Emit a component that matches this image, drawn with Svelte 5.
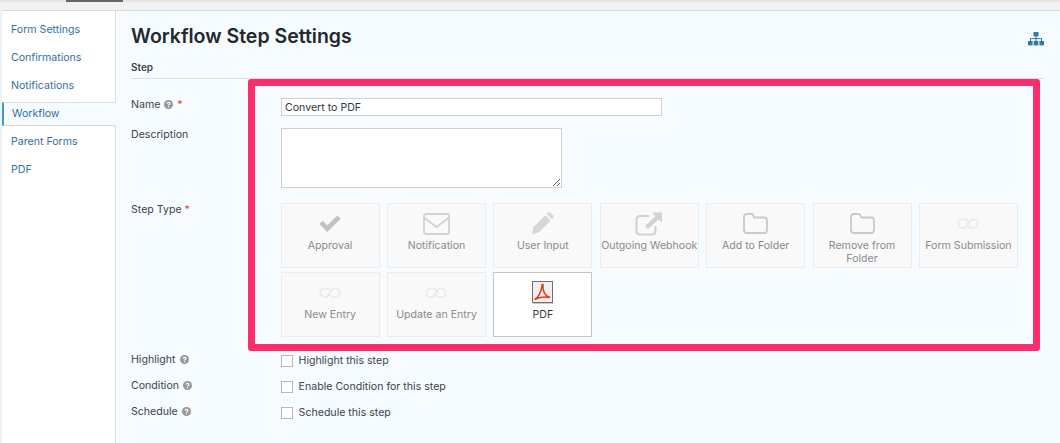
<script lang="ts">
	const menu = ['Form Settings', 'Confirmations', 'Notifications', 'Workflow', 'Parent Forms', 'PDF'];

	const step_types = [
		{ label: 'Approval', icon: 'check' },
		{ label: 'Notification', icon: 'mail' },
		{ label: 'User Input', icon: 'pencil' },
		{ label: 'Outgoing Webhook', icon: 'external' },
		{ label: 'Add to Folder', icon: 'folder' },
		{ label: 'Remove from Folder', icon: 'folder' },
		{ label: 'Form Submission', icon: 'link' },
		{ label: 'New Entry', icon: 'link' },
		{ label: 'Update an Entry', icon: 'link' },
		{ label: 'PDF', icon: 'pdf', active: true }
	];

	const options = [
		{ name: 'Highlight', text: 'Highlight this step' },
		{ name: 'Condition', text: 'Enable Condition for this step' },
		{ name: 'Schedule', text: 'Schedule this step' }
	];
</script>

{#snippet help()}
	<svg class="help" viewBox="0 0 10 10" width="9" height="9">
		<circle cx="5" cy="5" r="5" fill="#999" />
		<path d="M3.4 3.9 C3.5 2.2 6.7 2.3 6.6 4 C6.5 5.1 5 5 5 6.1" fill="none" stroke="#fff" stroke-width="1.2" />
		<rect x="4.4" y="6.9" width="1.2" height="1.2" fill="#fff" />
	</svg>
{/snippet}

<div class="topbar"><div class="tab"></div></div>

<div class="page">
	<nav class="side">
		{#each menu as item}
			<a href="#{item}" class:current={item === 'Workflow'}>{item}</a>
		{/each}
	</nav>

	<main class="content">
		<div class="head">
			<h1>Workflow Step Settings</h1>
			<svg class="tree" viewBox="0 0 16 14" width="16" height="14">
				<rect x="5.5" y="0" width="5" height="4.4" fill="#2f77b1" />
				<path d="M8 4v3M2.5 9V6.6h11V9M8 7v2" fill="none" stroke="#2f77b1" stroke-width="1" />
				<rect x="0" y="9" width="4.6" height="4.4" fill="#2f77b1" />
				<rect x="5.7" y="9" width="4.6" height="4.4" fill="#2f77b1" />
				<rect x="11.4" y="9" width="4.6" height="4.4" fill="#2f77b1" />
			</svg>
		</div>
		<h2>Step</h2>

		<div class="row name_row">
			<div class="label">Name {@render help()} <span class="req">*</span></div>
			<input type="text" value="Convert to PDF" />
		</div>
		<div class="row desc_row">
			<div class="label">Description</div>
			<textarea></textarea>
		</div>
		<div class="row type_row">
			<div class="label">Step Type <span class="req">*</span></div>
			<div class="tiles">
				{#each step_types as step}
					<div class="tile" class:active={step.active}>
						<div class="icon">
							{#if step.icon === 'check'}
								<svg viewBox="0 0 26 20" width="24" height="19">
									<path d="M1.5 10.5 L5 7 L10 12 L21 1.2 L24.6 4.8 L10 19.2 Z" fill="#c2c2c2" />
								</svg>
							{:else if step.icon === 'mail'}
								<svg viewBox="0 0 27 22" width="27" height="22">
									<rect x="1" y="1" width="25" height="20" rx="2" fill="none" stroke="#d2d2d2" stroke-width="1.8" />
									<path d="M1.5 5 L13.5 14 L25.5 5" fill="none" stroke="#d2d2d2" stroke-width="1.8" />
								</svg>
							{:else if step.icon === 'pencil'}
								<svg viewBox="0 0 24 24" width="23" height="23">
									<path d="M1 23 L2.5 16 L15 3.5 L20.5 9 L8 21.5 Z" fill="#d6d6d6" />
									<path d="M16.5 2 L18 0.6 Q19 0 20 0.6 L23.4 4 Q24 5 23.4 6 L22 7.5 Z" fill="#d6d6d6" />
								</svg>
							{:else if step.icon === 'external'}
								<svg viewBox="0 0 28 24" width="28" height="24">
									<path d="M14 4 H5 Q1.500 4 1.500 7.500 V19 Q1.500 22.500 5 22.500 H17 Q20.500 22.500 20.500 19 V14" fill="none" stroke="#d2d2d2" stroke-width="2.2" />
									<path d="M17 0.500 H27 V10.500 L23.500 7.500 L13 17 L10 14 L20.500 4 Z" fill="#d2d2d2" />
								</svg>
							{:else if step.icon === 'folder'}
								<svg viewBox="0 0 25 21" width="25" height="21">
									<path d="M1 4 Q1 1 4 1 H8.500 Q10 1 10.500 2.500 L11.200 4.500 H21 Q24 4.500 24 7.500 V17 Q24 20 21 20 H4 Q1 20 1 17 Z" fill="none" stroke="#c9c9c9" stroke-width="1.8" />
								</svg>
							{:else if step.icon === 'link'}
								<svg viewBox="0 0 22 12" width="22" height="12">
									<path d="M11 3.500 Q10 1.500 8 1.500 H5.500 A4.250 4.250 0 0 0 5.500 10 H8 L14 1.500 H16.500 A4.250 4.250 0 0 1 16.500 10 H14 Q12 10 11 8" fill="none" stroke="#e8e8e8" stroke-width="1.7" />
								</svg>
							{:else}
								<svg viewBox="0 0 21 23" width="21" height="23">
									<rect x="0.500" y="0.500" width="20" height="21" fill="#f2efec" stroke="#6f6f6f" />
									<path d="M2.500 18.500 C6 17 9.500 11 10 4.500 C10.300 2.500 11.200 3 11 5 C10.500 10 13 15 18 16.500 C12 15.500 7 16.500 2.500 18.500 Z" fill="none" stroke="#d8401f" stroke-width="1.500" />
									<rect x="1" y="22" width="20" height="1" fill="#ccc" />
								</svg>
							{/if}
						</div>
						<div class="tile_label">{step.label}</div>
					</div>
				{/each}
			</div>
		</div>

		<div class="options">
			{#each options as option}
				<div class="row option_row">
					<div class="label">{option.name} {@render help()}</div>
					<label class="check"><input type="checkbox" />{option.text}</label>
				</div>
			{/each}
		</div>
	</main>
</div>

<!-- annotation drawn over the screenshot -->
<div class="callout"></div>

<style>
	:global(body) {
		background: #f1f1f1;
		font-family: Inter, 'Liberation Sans', sans-serif;
		font-size: 10.600px;
		color: #3c434a;
		overflow: hidden;
	}

	.topbar {
		height: 2px;
		background: #e6e6e6;
		padding-left: 66px;
	}

	.tab {
		width: 57px;
		height: 2px;
		background: #666;
	}

	.page {
		display: flex;
		height: 433px;
		margin: 8px 0 0 2px;
		border-top: 1px solid #dcdcdc;
	}

	.side {
		width: 113px;
		flex: none;
		background: #fff;
		border-right: 1px solid #dcdcdc;
		padding-top: 5px;
	}

	.side a {
		display: block;
		height: 28px;
		line-height: 27px;
		padding-left: 9px;
		color: #336f9e;
		text-decoration: none;
		box-sizing: border-box;
	}

	.side a.current {
		height: 24px;
		margin: 2px -1px 2px 0;
		line-height: 21px;
		padding-left: 8px;
		background: #f6fbff;
		color: #336f9e;
		border-left: 2px solid #3b9cc7;
		border-top: 1px solid #dcdcdc;
		border-bottom: 1px solid #dcdcdc;
	}

	.content {
		flex: 1;
		background: #f6fbff;
		padding: 0 16px 0 15px;
	}

	.head {
		display: flex;
		justify-content: space-between;
		align-items: center;
		height: 50px;
	}

	h1 {
		margin: 0;
		font-size: 19.500px;
		font-weight: 600;
		color: #23282d;
	}

	.tree {
		margin-top: 5px;
	}

	h2 {
		margin: 0;
		height: 17px;
		font-size: 10px;
		font-weight: 600;
		line-height: 13px;
		color: #3c434a;
		border-bottom: 1px solid #dedede;
	}

	.row {
		display: flex;
	}

	.label {
		width: 149.600px;
		flex: none;
		color: #3c434a;
	}

	.help {
		vertical-align: -1px;
		margin: 0 1px;
	}

	.req {
		color: #e2401c;
	}

	.name_row {
		padding-top: 19px;
		height: 30px;
	}

	.name_row .label {
		line-height: 13px;
	}

	.name_row input {
		width: 381px;
		height: 18px;
		margin: 0;
		padding: 0 3.400px;
		box-sizing: border-box;
		border: 1px solid #cfcfcf;
		background: #fff;
		font: inherit;
		color: #32373c;
	}

	.desc_row {
		height: 75px;
	}

	.desc_row .label {
		line-height: 13px;
	}

	textarea {
		width: 281px;
		height: 60px;
		margin: 0;
		box-sizing: border-box;
		border: 1px solid #cfcfcf;
		background: #fff;
	}

	.type_row .label {
		line-height: 13px;
	}

	.type_row {
		height: 150px;
	}

	.tiles {
		display: grid;
		grid-template-columns: repeat(7, 99px);
		grid-auto-rows: 65px;
		gap: 4px 7.400px;
		align-content: start;
	}

	.tile {
		background: #f9f9f9;
		border: 1px solid #ececec;
		box-sizing: border-box;
		display: flex;
		flex-direction: column;
		align-items: center;
		color: #8a8a8a;
		text-align: center;
	}

	.tile.active {
		background: #fff;
		border-color: #c4c4c4;
		color: #32373c;
	}

	.icon {
		height: 31px;
		margin-top: 4px;
		display: flex;
		align-items: center;
		justify-content: center;
	}

	.tile_label {
		line-height: 13px;
	}

	.option_row {
		height: 26px;
		align-items: flex-start;
	}

	.option_row .label {
		line-height: 13px;
	}

	.check {
		display: flex;
		align-items: center;
		height: 13px;
		padding-top: 1px;
		color: #3c434a;
	}

	.check input {
		appearance: none;
		width: 12px;
		height: 12px;
		margin: 0 6px 0 0;
		border: 1px solid #b8b8b8;
		background: #fff;
		box-sizing: border-box;
	}

	.callout {
		position: absolute;
		left: 248px;
		top: 79px;
		width: 792px;
		height: 272px;
		box-sizing: border-box;
		border: 7px solid #fb2d6c;
		border-radius: 3px;
	}
</style>
